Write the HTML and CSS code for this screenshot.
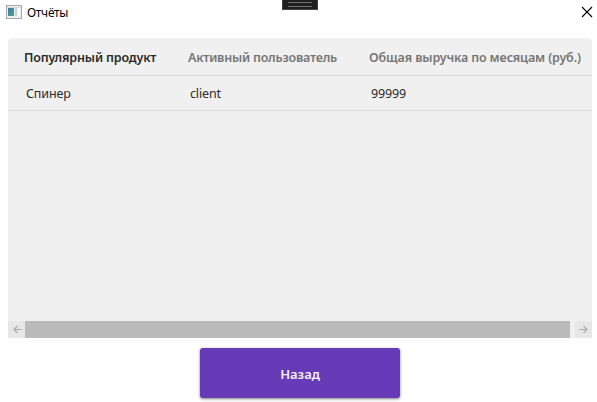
FILE: index.html
```
<!DOCTYPE html>
<html lang="ru">
<head>
<meta charset="utf-8">
<title>Отчёты</title>
<link rel="stylesheet" href="styles.css">
</head>
<body>
<div class="window">
  <header class="titlebar">
    <svg class="app-icon" width="16" height="14" viewBox="0 0 16 14">
      <defs><linearGradient id="g" x2="1" y2="1"><stop stop-color="#3d7ba5"/><stop offset="1" stop-color="#57a18a"/></linearGradient></defs>
      <rect x=".5" y=".5" width="15" height="13" fill="#eef0f1" stroke="#a3a9ad"/>
      <path d="M1 2.5h14" stroke="#d5dade"/>
      <rect x="2" y="3" width="6" height="8" fill="url(#g)"/>
      <rect x="9" y="3" width="2" height="8" fill="#c5d5dc"/>
      <rect x="12" y="3" width="2" height="8" fill="#fff"/>
    </svg>
    <span class="title">Отчёты</span>
    <svg class="close" width="12" height="12" viewBox="0 0 12 12"><path d="M1 1l10 10M11 1L1 11" stroke="#000" stroke-width="1.1"/></svg>
    <div class="debug-tab"></div>
  </header>
  <main class="panel">
    <div class="row head">
      <span class="c1 active">Популярный продукт</span><span class="c2">Активный пользователь</span><span class="c3">Общая выручка по месяцам (руб.)</span>
    </div>
    <div class="row data">
      <span class="c1">Спинер</span><span class="c2">client</span><span class="c3">99999</span>
    </div>
    <div class="scrollbar">
      <div class="arrow left"><svg width="9" height="9" viewBox="0 0 9 9"><path d="M8.5 4.5H1M4.5 1L1 4.5 4.5 8"/></svg></div>
      <div class="track"><div class="thumb"></div></div>
      <div class="arrow"><svg width="9" height="9" viewBox="0 0 9 9"><path d="M.5 4.5H8M4.5 1L8 4.5 4.5 8"/></svg></div>
    </div>
  </main>
  <button class="back">Назад</button>
</div>
</body>
</html>
```

FILE: styles.css
```
* { box-sizing: border-box; }
body { margin: 0; background: #fff; font-family: "Noto Sans", sans-serif; }
.window { width: 597px; height: 402px; overflow: hidden; display: flex; flex-direction: column; }
.titlebar { position: relative; height: 38px; flex: none; display: flex; align-items: flex-start; padding: 5px 4px 0 6px; }
.title { margin: -1px 0 0 5px; font-size: 12px; line-height: 18px; letter-spacing: -0.3px; color: #000; }
.close { margin: 1px 0 0 auto; }
.debug-tab { position: absolute; left: 282px; top: 0; width: 36px; height: 10px; background: #202020; border: solid #484848; border-width: 0 1px 1px; }
.debug-tab::before { content: ""; display: block; margin: 2px auto 0; width: 24px; height: 3px; border: solid #737373; border-width: 1px 0; }
.panel { width: 584px; height: 300px; margin-left: 8px; flex: none; background: #f0f0f0; border-radius: 4px 4px 0 0; display: flex; flex-direction: column; }
.row { display: grid; grid-template-columns: 164px 181px 1fr; padding-left: 16px; border-bottom: 1px solid #d9d9d9; white-space: nowrap; }
.head { height: 38px; line-height: 39px; font-size: 12.5px; font-weight: 600; letter-spacing: -0.15px; color: #767676; }
.head .c2 { letter-spacing: -0.22px; }
.head .c3 { letter-spacing: -0.13px; }
.head .active { color: #2b2b2b; }
.data { height: 35px; line-height: 35px; padding-left: 18px; font-size: 12.5px; letter-spacing: -0.15px; color: #2b2b2b; }
.scrollbar { display: flex; height: 17px; margin-top: auto; }
.arrow { width: 17px; background: #e7e7e7; display: grid; place-items: center; }
.left { padding-left: 1px; }
.arrow path { fill: none; stroke: #aaa; stroke-width: 1.2; }
.track { flex: 1; background: #f0f0f0; }
.thumb { width: 545px; height: 17px; background: #bababa; }
.back { width: 200px; height: 50px; margin: 10px 0 0 200px; flex: none; padding: 2px 0 0; border: 0; border-radius: 3px; background: #673ab7; color: #f5f0fc; font: 600 13px "Noto Sans", sans-serif; box-shadow: 0 1px 3px rgba(0,0,0,.5); }
```
